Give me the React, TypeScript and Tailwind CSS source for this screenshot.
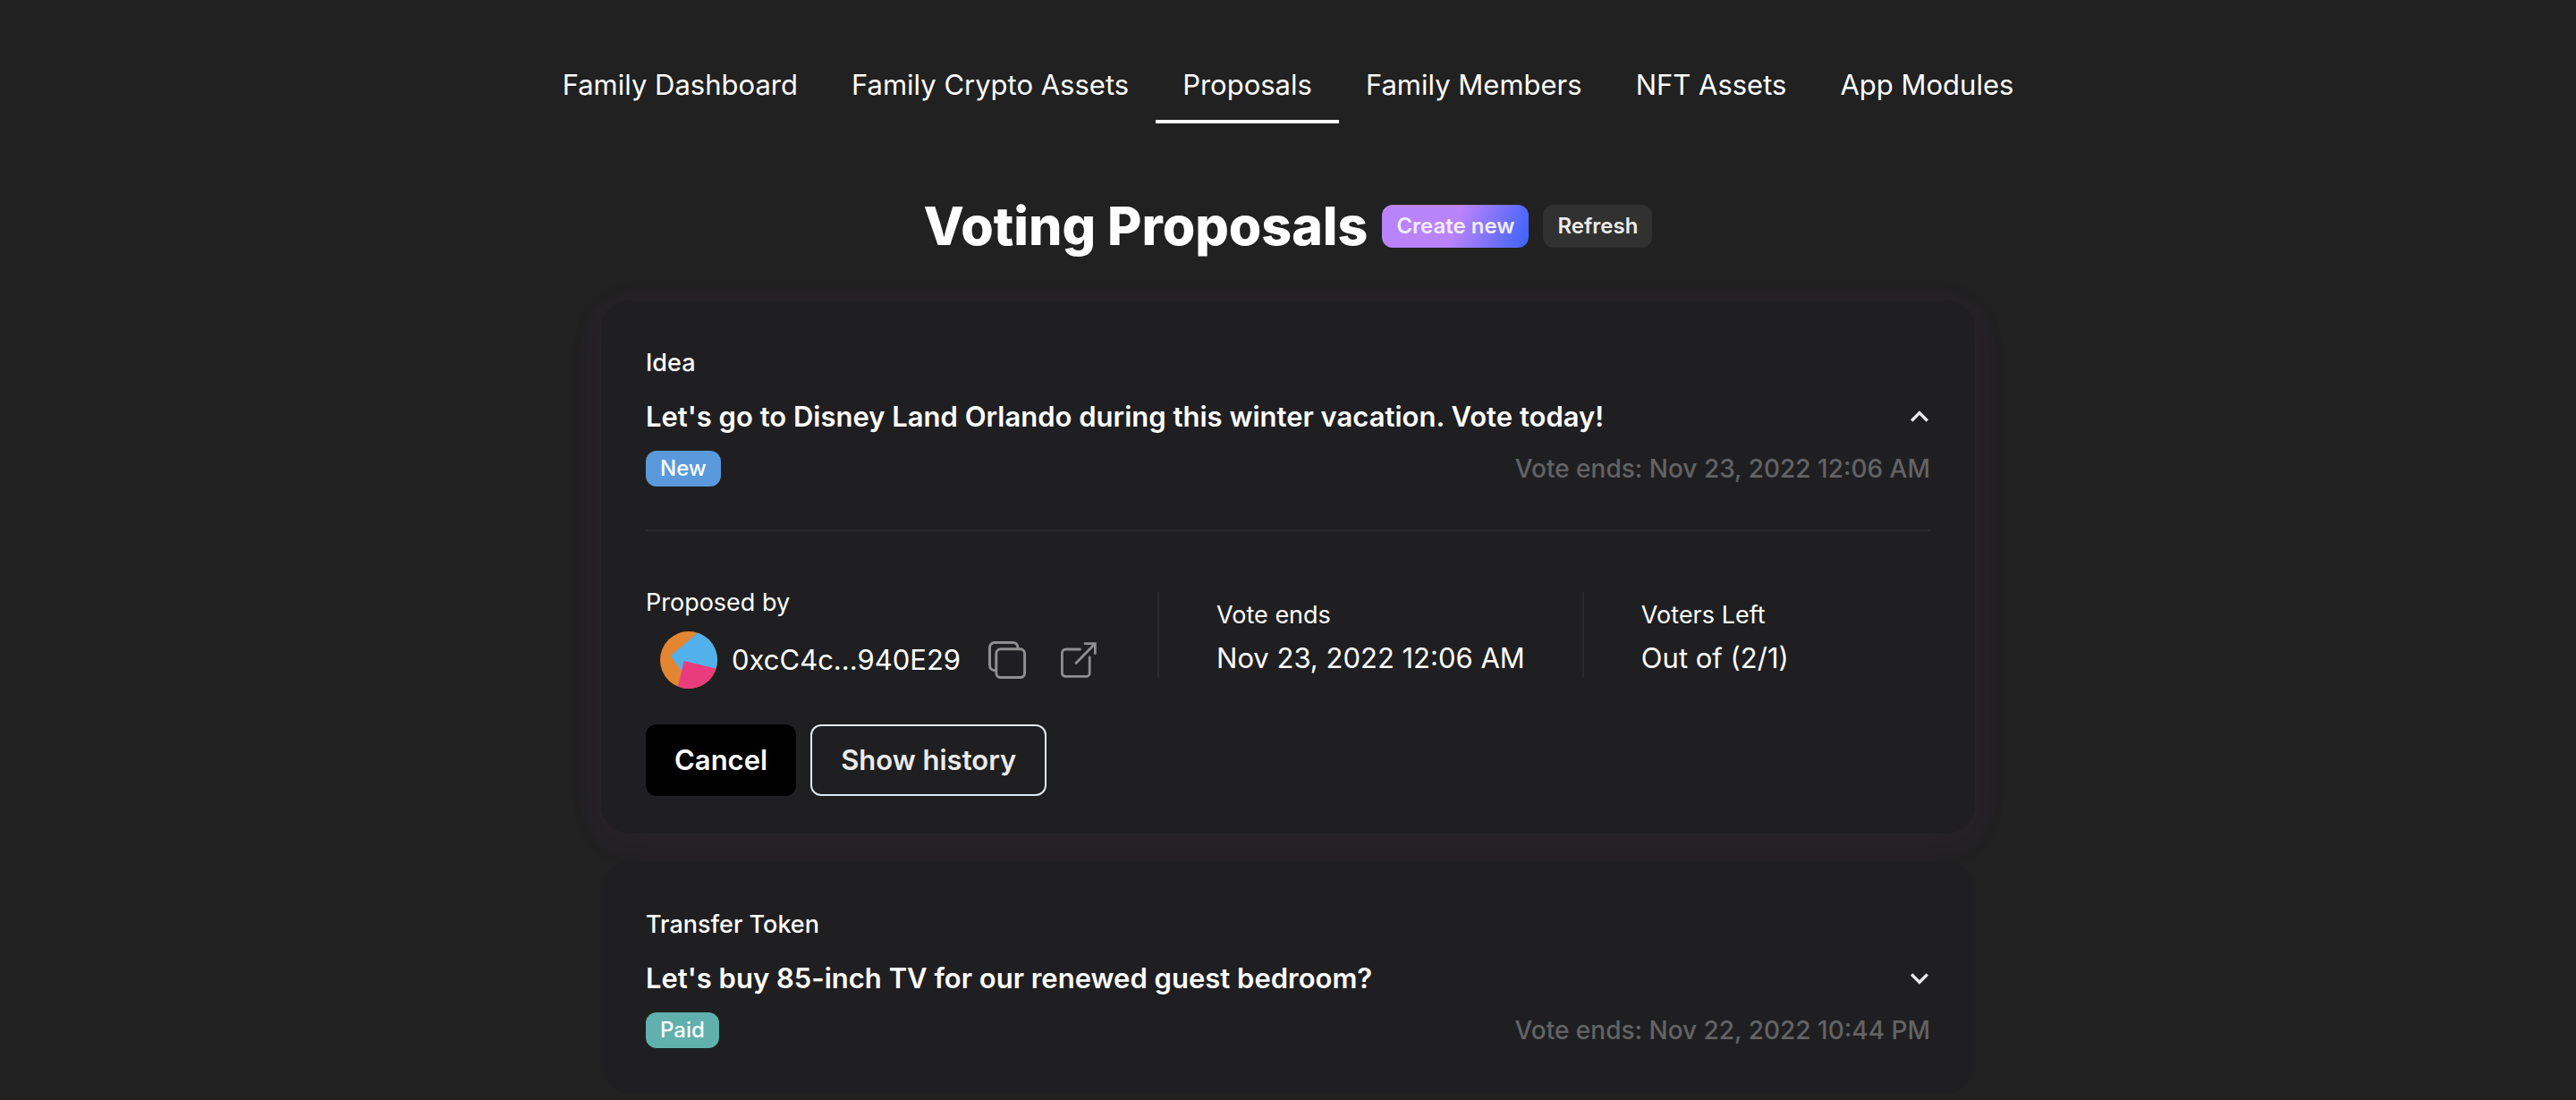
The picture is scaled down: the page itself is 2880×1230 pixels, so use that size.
import React, { useState } from 'react';

interface Proposal {
  id: string;
  type: string;
  title: string;
  status: 'New' | 'Paid';
  endsAt: string;
  proposer: string;
  voters: string;
}

const TABS = [
  'Family Dashboard',
  'Family Crypto Assets',
  'Proposals',
  'Family Members',
  'NFT Assets',
  'App Modules',
];

const PROPOSALS: Proposal[] = [
  {
    id: 'idea',
    type: 'Idea',
    title: "Let's go to Disney Land Orlando during this winter vacation. Vote today!",
    status: 'New',
    endsAt: 'Nov 23, 2022 12:06 AM',
    proposer: '0xcC4c...940E29',
    voters: 'Out of (2/1)',
  },
  {
    id: 'transfer',
    type: 'Transfer Token',
    title: "Let's buy 85-inch TV for our renewed guest bedroom?",
    status: 'Paid',
    endsAt: 'Nov 22, 2022 10:44 PM',
    proposer: '0xcC4c...940E29',
    voters: 'Out of (2/1)',
  },
];

const STATUS_COLORS = {
  New: 'bg-[#5a9adc]',
  Paid: 'bg-[#60b0ad]',
};

const Avatar = () => (
  <svg viewBox="0 0 64 64" className="size-16 shrink-0 rounded-full" aria-hidden="true">
    <rect width="64" height="64" fill="#e38632" />
    <path d="M40 0 L41 3 L46 2 V0 Z" fill="#1c8a7c" />
    <path d="M43.5 0.5 L11.7 27.3 L24 44 L64 44 V8 Z" fill="#52b0ea" />
    <path d="M26.7 33 L64 42 V64 H19.4 Z" fill="#ea3c7d" />
  </svg>
);

const CopyIcon = () => (
  <svg viewBox="0 0 48 48" className="size-12" fill="none" stroke="#8f8f8f" strokeWidth="3" aria-hidden="true">
    <rect x="11.8" y="11.8" width="31.8" height="31.8" rx="5" />
    <path d="M11.8 35.6 H10 A5.5 5.5 0 0 1 4.5 30 V10 A5.5 5.5 0 0 1 10 4.5 H30.5 A5.5 5.5 0 0 1 36 10 V11.8" />
  </svg>
);

const ExternalIcon = () => (
  <svg
    viewBox="0 0 48 48"
    className="size-12"
    fill="none"
    stroke="#8f8f8f"
    strokeWidth="2.8"
    strokeLinecap="round"
    aria-hidden="true"
  >
    <path d="M25.5 12 H9.4 A4 4 0 0 0 5.4 16 V38.4 A4 4 0 0 0 9.4 42.4 H32.2 A4 4 0 0 0 36.2 38.4 V21" />
    <path d="M31 5.6 H42.4 V16.5 M41.5 6.5 L21 27.5" />
  </svg>
);

const Chevron = ({ open }: { open: boolean }) => (
  <svg viewBox="4.8 4.8 14.4 14.4" className="size-6" fill="#ebebeb" aria-hidden="true">
    <path
      d={
        open
          ? 'M12 8l-6 6 1.41 1.41L12 10.83l4.59 4.58L18 14z'
          : 'M16.59 8.59L12 13.17 7.41 8.59 6 10l6 6 6-6z'
      }
    />
  </svg>
);

const Divider = () => <div className="mx-16 h-24 w-0.5 bg-[#2a2a2c]" />;

const Stat = ({ label, value }: { label: string; value: string }) => (
  <div className="pt-2">
    <div className="text-[27px] leading-10">{label}</div>
    <div className="mt-1 text-[31px] leading-12">{value}</div>
  </div>
);

const ProposalDetails = ({ proposal }: { proposal: Proposal }) => (
  <>
    <hr className="mt-12 border-t-2 border-[#2a2a2c]" />
    <div className="mt-14 flex items-center">
      <div>
        <div className="text-[27px] leading-12">Proposed by</div>
        <div className="mt-2 flex items-center pl-4">
          <Avatar />
          <span className="ml-4 text-[31px] leading-12">{proposal.proposer}</span>
          <button type="button" aria-label="Copy address" className="ml-7">
            <CopyIcon />
          </button>
          <a href="#explorer" aria-label="Open in explorer" className="ml-8">
            <ExternalIcon />
          </a>
        </div>
      </div>
      <Divider />
      <Stat label="Vote ends" value={proposal.endsAt} />
      <Divider />
      <Stat label="Voters Left" value={proposal.voters} />
    </div>
    <div className="mt-10 flex gap-4">
      <button type="button" className="h-20 rounded-xl bg-black px-8 text-[31px] font-semibold">
        Cancel
      </button>
      <button
        type="button"
        className="h-20 rounded-xl border-2 border-[#e2e8f0] px-8 text-[31px] font-semibold text-[#ebebeb]"
      >
        Show history
      </button>
    </div>
  </>
);

const ProposalCard = ({
  proposal,
  open,
  onToggle,
}: {
  proposal: Proposal;
  open: boolean;
  onToggle: () => void;
}) => (
  <section
    className={`rounded-[32px] bg-[#1f1f21] px-[50px] pt-[50px] ${
      open ? 'pb-[42px] shadow-[0_8px_40px_rgba(180,70,220,0.07)]' : 'relative pb-[50px]'
    }`}
  >
    <div className="text-[27px] leading-10 font-medium">{proposal.type}</div>
    <div className="mt-4 flex items-center justify-between">
      <h2 className="text-[31px] leading-12 font-semibold">{proposal.title}</h2>
      <button type="button" aria-label="Toggle details" aria-expanded={open} onClick={onToggle}>
        <Chevron open={open} />
      </button>
    </div>
    <div className="mt-[14px] flex items-center justify-between">
      <span className={`rounded-xl px-4 text-2xl leading-10 font-medium ${STATUS_COLORS[proposal.status]}`}>
        {proposal.status}
      </span>
      <span className="text-[28px] leading-10 font-medium text-[#636364]">Vote ends: {proposal.endsAt}</span>
    </div>
    {open && <ProposalDetails proposal={proposal} />}
  </section>
);

export default function App() {
  const [tab, setTab] = useState('Proposals');
  const [openId, setOpenId] = useState<string | null>('idea');

  return (
    <div className="min-h-screen bg-[#212121] pt-14 font-['Inter',sans-serif] text-white">
      <nav className="flex justify-center">
        {TABS.map((name) => (
          <button
            key={name}
            type="button"
            onClick={() => setTab(name)}
            className={`border-b-4 px-[30px] pt-[15px] pb-[15px] text-[31px] leading-12 ${
              tab === name ? 'border-white' : 'border-transparent'
            }`}
          >
            {name}
          </button>
        ))}
      </nav>

      <main className="mx-auto max-w-[1536px]">
        <div className="mt-20 flex items-center justify-center gap-4">
          <h1 className="text-[59px] leading-[70px] font-extrabold">Voting Proposals</h1>
          <button
            type="button"
            className="h-12 rounded-xl bg-[linear-gradient(110deg,#b983f9_50%,#3a62fa)] px-4 text-2xl font-semibold text-[#f0ebfa]"
          >
            Create new
          </button>
          <button type="button" className="h-12 rounded-xl bg-[#313131] px-4 text-2xl font-semibold text-[#ebebeb]">
            Refresh
          </button>
        </div>

        <div className="mt-12 flex flex-col gap-8">
          {PROPOSALS.map((proposal) => (
            <ProposalCard
              key={proposal.id}
              proposal={proposal}
              open={openId === proposal.id}
              onToggle={() => setOpenId(openId === proposal.id ? null : proposal.id)}
            />
          ))}
        </div>
      </main>
    </div>
  );
}
